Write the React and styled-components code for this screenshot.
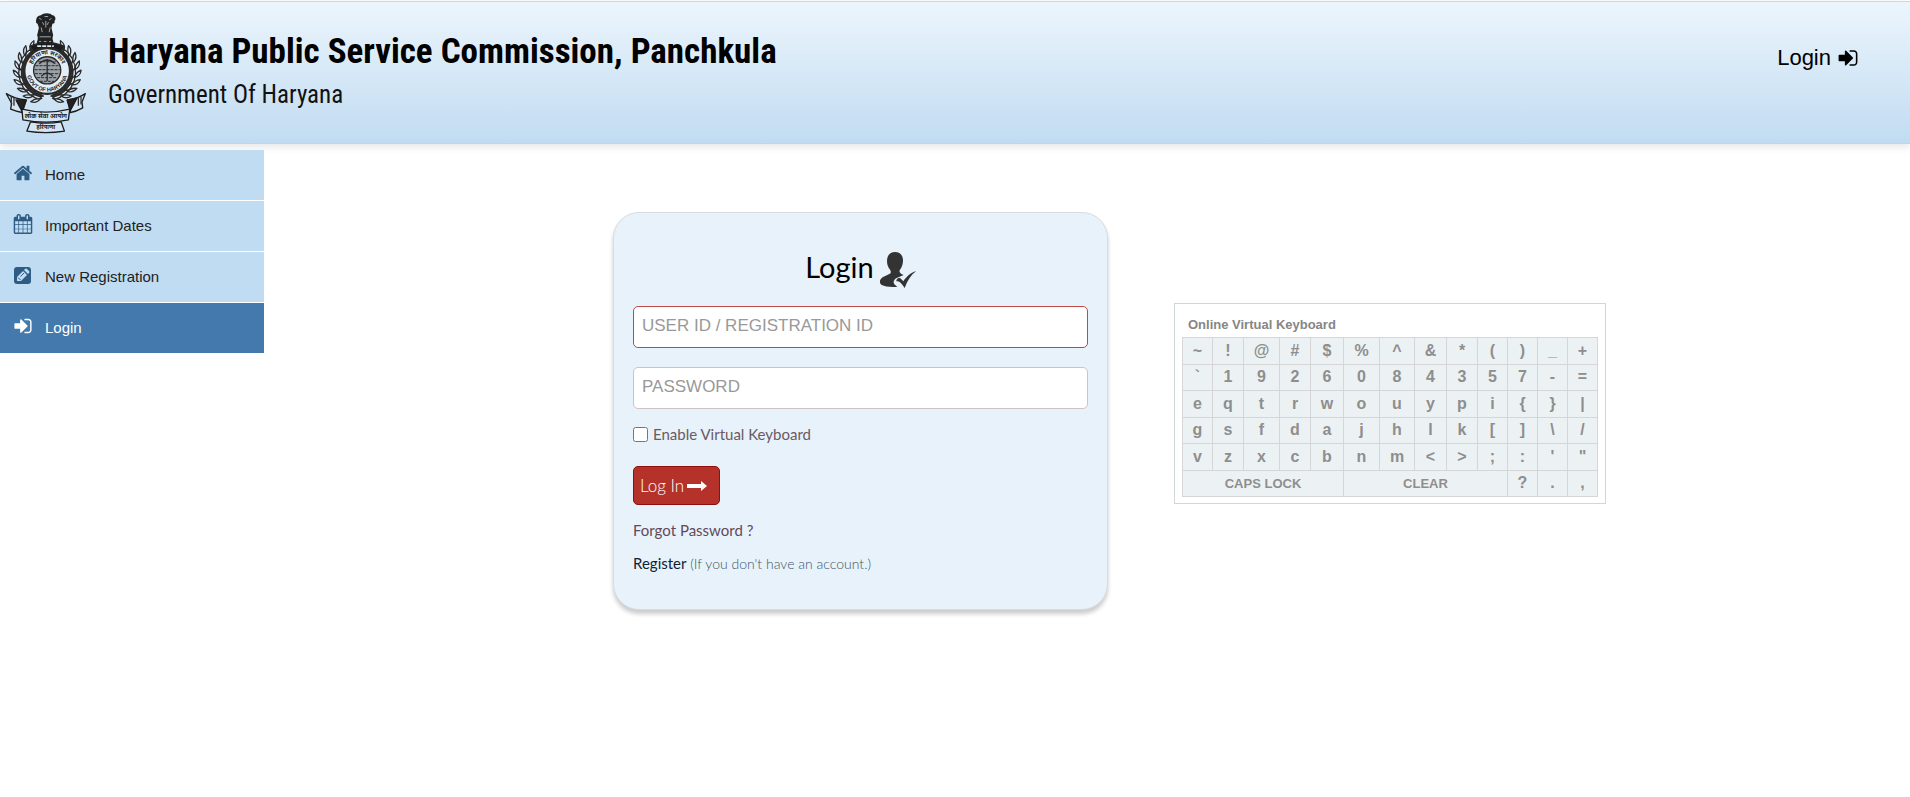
import React, { useState } from "react";
import styled, { createGlobalStyle } from "styled-components";

const GlobalStyle = createGlobalStyle`
    * {
        box-sizing: border-box;
    }
    body {
        margin: 0;
        background-color: #fff;
        font-family: "Liberation Sans", Arial, sans-serif;
        font-size: 15px;
        color: #222;
    }
`

const Header = styled.header`
    display: flex;
    align-items: flex-start;
    height: 143px;
    margin-top: 1px;
    padding: 10px 51px 0 5px;
    border-top: 1px solid #d5d5d5;
    border-bottom: 1px solid #ccd2d8;
    background: linear-gradient(#ecf5fc, #c1dcf2);
    box-shadow: 0 3px 8px rgba(0, 0, 0, 0.1);
`
const EmblemSvg = styled.svg`
    width: 83px;
    height: 123px;
    flex-shrink: 0;
`
const Titles = styled.div`
    flex: 1;
    padding: 20px 0 0 20px;
    font-family: "Roboto Condensed", Roboto, sans-serif;
    color: #000;
`
const Title = styled.h1`
    margin: 0;
    font-size: 35px;
    line-height: 40px;
    font-weight: 700;
`
const Subtitle = styled.p`
    margin: 8px 0 0;
    font-size: 25px;
    line-height: 30px;
    color: #111;
`
const HeaderLink = styled.a`
    display: flex;
    align-items: center;
    gap: 6px;
    padding-top: 32px;
    font-size: 22px;
    line-height: 28px;
    color: #000;
    text-decoration: none;
`
const Icon = styled.svg`
    width: ${(props) => props.$size}px;
    height: ${(props) => props.$size}px;
    flex-shrink: 0;
    fill: currentColor;
`

const Body = styled.div`
    display: flex;
    align-items: flex-start;
    padding: 6px 0 40px;
`
const Sidebar = styled.nav`
    display: flex;
    flex-direction: column;
    gap: 1px;
    width: 264px;
    flex-shrink: 0;
`
const SideLink = styled.a`
    display: flex;
    align-items: center;
    height: 50px;
    padding: 0 0 1px 13px;
    background-color: ${(props) => (props.$active ? "#4379ac" : "#c0dcf2")};
    color: ${(props) => (props.$active ? "#fff" : "#222")};
    text-decoration: none;

    svg {
        margin: 0 12px 4px 0;
        color: ${(props) => (props.$active ? "#fff" : "#2e5c85")};
    }
`

const Content = styled.main`
    flex: 1;
    display: grid;
    grid-template-columns: 349fr 495fr 66fr 432fr 304fr;
    align-items: start;
    padding-top: 62px;
`
const Card = styled.form`
    grid-column: 2;
    display: flex;
    flex-direction: column;
    align-items: flex-start;
    padding: 35px 19px 33px;
    border: 1px solid #d9dcde;
    border-radius: 26px;
    background-color: #e7f2fb;
    box-shadow: 0 4px 4px #ccc;
    font-family: Lato, sans-serif;
`
const CardTitle = styled.h2`
    display: flex;
    align-items: flex-start;
    align-self: center;
    gap: 6px;
    margin: 0 0 18px;
    font-size: 29px;
    line-height: 38px;
    font-weight: 400;
    color: #000;

    svg {
        margin-top: 4px;
    }
`
const TextInput = styled.input`
    width: 100%;
    height: 42px;
    margin-bottom: 19px;
    padding: 0 8px 2px;
    border: 1px solid ${(props) => (props.$focused ? "#b94a48" : "#d2c1c4")};
    border-radius: 5px;
    background-color: #fff;
    outline: none;
    font-family: "Liberation Sans", Arial, sans-serif;
    font-size: 17px;

    &::placeholder {
        color: #999;
        opacity: 1;
    }
`
const CheckLabel = styled.label`
    display: flex;
    align-items: center;
    gap: 5px;
    margin: -6px 0 20px;
    line-height: 24px;
    color: #6b5a62;

    input {
        width: 15px;
        height: 15px;
        margin: 0;
    }
`
const LoginButton = styled.button`
    display: flex;
    align-items: center;
    gap: 3px;
    height: 39px;
    margin-bottom: 13px;
    padding: 0 12px 0 6px;
    border: 1px solid #8f0e0e;
    border-radius: 5px;
    background-color: #b5322b;
    color: #fff;
    font-family: Lato, sans-serif;
    font-size: 17px;
    font-weight: 300;
    cursor: pointer;
`
const Arrow = styled.svg`
    width: 20px;
    height: 10px;
    fill: currentColor;
`
const CardLink = styled.a`
    color: ${(props) => (props.$dark ? "#123" : "#64485a")};
    line-height: 24px;
    text-decoration: none;
`
const RegisterLine = styled.p`
    margin: 9px 0 0;
    line-height: 24px;
    font-size: 14px;
    font-weight: 300;
    color: #456;

    a {
        font-size: 15px;
        font-weight: 400;
    }
`

const Keyboard = styled.section`
    grid-column: 4;
    margin-top: 91px;
    padding: 9px 7px 6px;
    border: 1px solid #d0d8d6;
`
const KeyboardTitle = styled.h3`
    margin: 0;
    padding: 0 6px;
    font-size: 13px;
    line-height: 24px;
    color: #868686;
`
const KeyTable = styled.table`
    width: 100%;
    height: 160px;
    table-layout: fixed;
    border-collapse: collapse;

    td {
        padding: 0;
        border: 1px solid #d6d6d8;
        background-color: #ecf2f3;
    }
`
const Key = styled.button`
    display: block;
    width: 100%;
    height: 25px;
    padding: 0;
    border: 0;
    background: none;
    color: #8e8e8e;
    font-family: "Liberation Sans", Arial, sans-serif;
    font-size: ${(props) => (props.$wide ? 13 : 16)}px;
    font-weight: 700;
    cursor: pointer;
`

const paths = {
    home: "M1472 992v480q0 26-19 45t-45 19h-384v-384h-256v384h-384q-26 0-45-19t-19-45v-480q0-1 .5-3t.5-3l575-474 575 474q1 2 1 6zm223-69l-62 74q-8 9-21 11h-3q-13 0-21-7l-692-577-692 577q-12 8-24 7-13-2-21-11l-62-74q-8-10-7-23.5t11-21.5l719-599q32-26 76-26t76 26l244 204v-195q0-14 9-23t23-9h192q14 0 23 9t9 23v408l219 182q10 8 11 21.5t-7 23.5z",
    calendar: "M192 1664h288v-288h-288v288zm352 0h320v-288h-320v288zm-352-352h288v-320h-288v320zm352 0h320v-320h-320v320zm-352-384h288v-288h-288v288zm736 736h320v-288h-320v288zm-384-736h320v-288h-320v288zm768 736h288v-288h-288v288zm-384-352h320v-320h-320v320zm-352-864v-288q0-13-9.5-22.5t-22.5-9.5h-64q-13 0-22.5 9.5t-9.5 22.5v288q0 13 9.5 22.5t22.5 9.5h64q13 0 22.5-9.5t9.5-22.5zm736 864h288v-320h-288v320zm-384-384h320v-288h-320v288zm384 0h288v-288h-288v288zm32-480v-288q0-13-9.5-22.5t-22.5-9.5h-64q-13 0-22.5 9.5t-9.5 22.5v288q0 13 9.5 22.5t22.5 9.5h64q13 0 22.5-9.5t9.5-22.5zm384-64v1280q0 52-38 90t-90 38h-1408q-52 0-90-38t-38-90v-1280q0-52 38-90t90-38h128v-96q0-66 47-113t113-47h64q66 0 113 47t47 113v96h384v-96q0-66 47-113t113-47h64q66 0 113 47t47 113v96h128q52 0 90 38t38 90z",
    signIn: "M1312 896q0 26-19 45l-544 544q-19 19-45 19t-45-19-19-45v-288h-448q-26 0-45-19t-19-45v-384q0-26 19-45t45-19h448v-288q0-26 19-45t45-19 45 19l544 544q19 19 19 45zm352-352v704q0 119-84.5 203.5t-203.5 84.5h-320q-13 0-22.5-9.5t-9.5-22.5q0-4-1-20t-.5-26.5 3-23.5 10-19.5 20.5-6.5h320q66 0 113-47t47-113v-704q0-66-47-113t-113-47h-312l-11.5-1-11.5-3-8-5.5-7-9-2-13.5q0-4-1-20t-.5-26.5 3-23.5 10-19.5 20.5-6.5h320q119 0 203.5 84.5t84.5 203.5z",
}

const Glyph = ({ name, size = 20 }) => (
    <Icon $size={size} viewBox="0 0 1792 1792" aria-hidden="true">
        <path d={paths[name]} />
    </Icon>
)

const PencilSquare = () => (
    <Icon $size={20} viewBox="0 0 20 20" aria-hidden="true">
        <rect x="1" y="2" width="17" height="17" rx="3" />
        <g fill="#c0dcf2">
            <path d="M4 16v-4l6-6 4 4-6 6z" />
            <path d="M11 5l1-1q1-1 2 0l2 2q1 1 0 2l-1 1z" />
        </g>
        <path d="M5 12.500l2.500 2.500M7.500 11.500l3.500-3.500" stroke="currentColor" strokeWidth="1" />
    </Icon>
)

const leafAngles = [-58, -42, -26, -10, 6, 22, 38, 54, 70]

// one half of the laurel wreath, drawn from the top of the ring to the bottom
const Laurel = () => (
    <g>
        {leafAngles.map((angle) => (
            <g key={angle} transform={`rotate(${angle} 142 212)`}>
                <path d="M222 224q-9-16 1-32q10 18-1 32z" fill="#dfeaf2" />
                <path d="M226 220q2-16 17-24q0 18-17 24z" fill="#e6eff6" />
                <path d="M214 226q-5-16 2-29q8 15-2 29z" fill="#333" />
            </g>
        ))}
    </g>
)

const Emblem = () => (
    <EmblemSvg viewBox="15 32 250 369" role="img" aria-label="Emblem of Haryana">
        <g stroke="#2a2a2a" strokeWidth="4" fill="none" strokeLinejoin="round">
            <Laurel />
            <g transform="translate(284 0) scale(-1 1)">
                <Laurel />
            </g>
            <path d="M90 134q50-20 104 0l-12 18q-38-14-80 0z" fill="#1c1c1c" />
            <circle cx="142" cy="209" r="69" fill="#e4eef6" strokeWidth="7" />
            <circle cx="142" cy="207" r="41" fill="#9aa2a8" strokeWidth="4" />
            <path d="M107 193h70M104 205h76M105 217h74M112 229h60M120 240h44M116 181h52" strokeWidth="3" strokeDasharray="9 3" />
            <path d="M118 187q24-22 48 0M124 225q18-20 36 0M142 173v66" strokeWidth="4" />
        </g>
        {/* lion capital */}
        <g fill="#222">
            <path d="M109 54q2-12 14-13q6-6 18-6q12 0 17 6q9 1 9 12l-3 5q3 6-6 9l-3 12 5 22h-48l5-22-4-12q-7-3-4-13z" />
            <path d="M112 99h48l-2 12 4 16h-52l4-16z" />
        </g>
        <g stroke="#9aa8b2" strokeWidth="3" fill="none">
            <path d="M118 50l7 4M134 45h11M155 51l-7 4M128 62l4 8M146 62l-4 8M138 58v20M124 78l3 14M151 78l-3 14" />
            <path d="M119 106h34M118 120h6M132 120h8M148 120h6" />
        </g>
        <path d="M112 134h50" stroke="#dce8f1" strokeWidth="5" strokeDasharray="12 3" />
        <path id="ringTop" d="M92 209a50 50 0 0 1 100 0" fill="none" />
        <path id="ringBottom" d="M80 209a62 62 0 0 0 124 0" fill="none" />
        <g fontFamily="Liberation Sans, Noto Sans, sans-serif" fontWeight="700" fill="#222" textAnchor="middle">
            <text fontSize="18">
                <textPath href="#ringTop" startOffset="50%">हरियाणा सरकार</textPath>
            </text>
            <text fontSize="17">
                <textPath href="#ringBottom" startOffset="50%">GOVT OF HARYANA</textPath>
            </text>
        </g>
        {/* ribbon */}
        <g stroke="#1c1c1c" strokeWidth="4" strokeLinejoin="round" fill="#d4e5f3">
            <path d="M19 277q25 16 60 19l-12 38q-18-3-35-10l3-18z" />
            <path d="M257 277q-25 16-53 19l8 38q18-3 37-14l-2-18z" />
            <path d="M48 296l31 1-13 33zM232 290l-30 7 10 31z" fill="#222" />
            <path d="M66 324q72 18 144 0l-4 32q-68 14-137 0z" />
            <path d="M92 362q46 8 92 0l10 28q-56 9-113 0z" />
        </g>
        <path d="M34 286v24M42 290v24M244 286v24M236 290v24" stroke="#333" strokeWidth="4" />
        <g fontFamily="Noto Sans, sans-serif" fontWeight="700" fill="#222" textAnchor="middle">
            <text x="138" y="352" fontSize="19">लोक सेवा आयोग</text>
            <text x="138" y="385" fontSize="17">हरियाणा</text>
        </g>
    </EmblemSvg>
)

const UserCheck = () => (
    <Icon $size={36} viewBox="0 0 108 108" aria-hidden="true">
        <g fill="#333">
            <path d="M45 0c16 0 25 12 24 28c-1 13-5 20-10 27c-2 6 2 10 12 14l-12 5c-10 3-18 8-18 17c0 5 4 9 11 13c-18 2-37 0-47-5c-5-3-7-9-4-16c6-11 27-14 31-20c1-4 0-7-2-10c-6-7-9-15-9-26c0-16 9-27 24-27z" />
            <path d="M49 88c0-8 6-12 12-9l9 9c9-14 22-26 38-30c-15 11-26 28-34 50c-5-7-9-12-14-17c-4-3-7-4-11-3z" />
        </g>
    </Icon>
)

const menu = [
    { label: "Home", icon: <Glyph name="home" /> },
    { label: "Important Dates", icon: <Glyph name="calendar" /> },
    { label: "New Registration", icon: <PencilSquare /> },
    { label: "Login", icon: <Glyph name="signIn" />, active: true },
]

const columns = [30, 31, 36, 31, 33, 36, 35, 32, 31, 30, 30, 30, 30]
const keyRows = ["~!@#$%^&*()_+", "`1926084357-=", "eqtrwouypi{}|", "gsfdajhlk[]\\/", "vzxcbnm<>;:'\""]

const VirtualKeyboard = () => (
    <Keyboard>
        <KeyboardTitle>Online Virtual Keyboard</KeyboardTitle>
        <KeyTable>
            <colgroup>
                {columns.map((width, i) => (
                    <col key={i} style={{ width: `${(width / 415) * 100}%` }} />
                ))}
            </colgroup>
            <tbody>
                {keyRows.map((row) => (
                    <tr key={row}>
                        {row.split("").map((key) => (
                            <td key={key}><Key type="button">{key}</Key></td>
                        ))}
                    </tr>
                ))}
                <tr>
                    <td colSpan={5}><Key type="button" $wide>CAPS LOCK</Key></td>
                    <td colSpan={5}><Key type="button" $wide>CLEAR</Key></td>
                    <td><Key type="button">?</Key></td>
                    <td><Key type="button">.</Key></td>
                    <td><Key type="button">,</Key></td>
                </tr>
            </tbody>
        </KeyTable>
    </Keyboard>
)

const LoginForm = () => {
    const [virtual, setVirtual] = useState(false)
    return (
        <Card onSubmit={(e) => e.preventDefault()}>
            <CardTitle>Login <UserCheck /></CardTitle>
            <TextInput $focused type="text" aria-label="User ID / Registration ID" placeholder="USER ID / REGISTRATION ID" />
            <TextInput type="password" aria-label="Password" placeholder="PASSWORD" />
            <CheckLabel>
                <input type="checkbox" checked={virtual} onChange={(e) => setVirtual(e.target.checked)} />
                Enable Virtual Keyboard
            </CheckLabel>
            <LoginButton type="submit">
                Log In
                <Arrow viewBox="0 0 20 10" aria-hidden="true">
                    <path d="M0 3h14V0l6 5-6 5V7H0z" />
                </Arrow>
            </LoginButton>
            <CardLink href="#forgot">Forgot Password ?</CardLink>
            <RegisterLine>
                <CardLink href="#register" $dark>Register</CardLink> (If you don't have an account.)
            </RegisterLine>
        </Card>
    )
}

export default function App() {
    return (
        <>
            <GlobalStyle />
            <Header>
                <Emblem />
                <Titles>
                    <Title>Haryana Public Service Commission, Panchkula</Title>
                    <Subtitle>Government Of Haryana</Subtitle>
                </Titles>
                <HeaderLink href="#login">Login <Glyph name="signIn" size={22} /></HeaderLink>
            </Header>
            <Body>
                <Sidebar>
                    {menu.map((item) => (
                        <SideLink key={item.label} href="#" $active={item.active}>
                            {item.icon}
                            {item.label}
                        </SideLink>
                    ))}
                </Sidebar>
                <Content>
                    <LoginForm />
                    <VirtualKeyboard />
                </Content>
            </Body>
        </>
    )
}
